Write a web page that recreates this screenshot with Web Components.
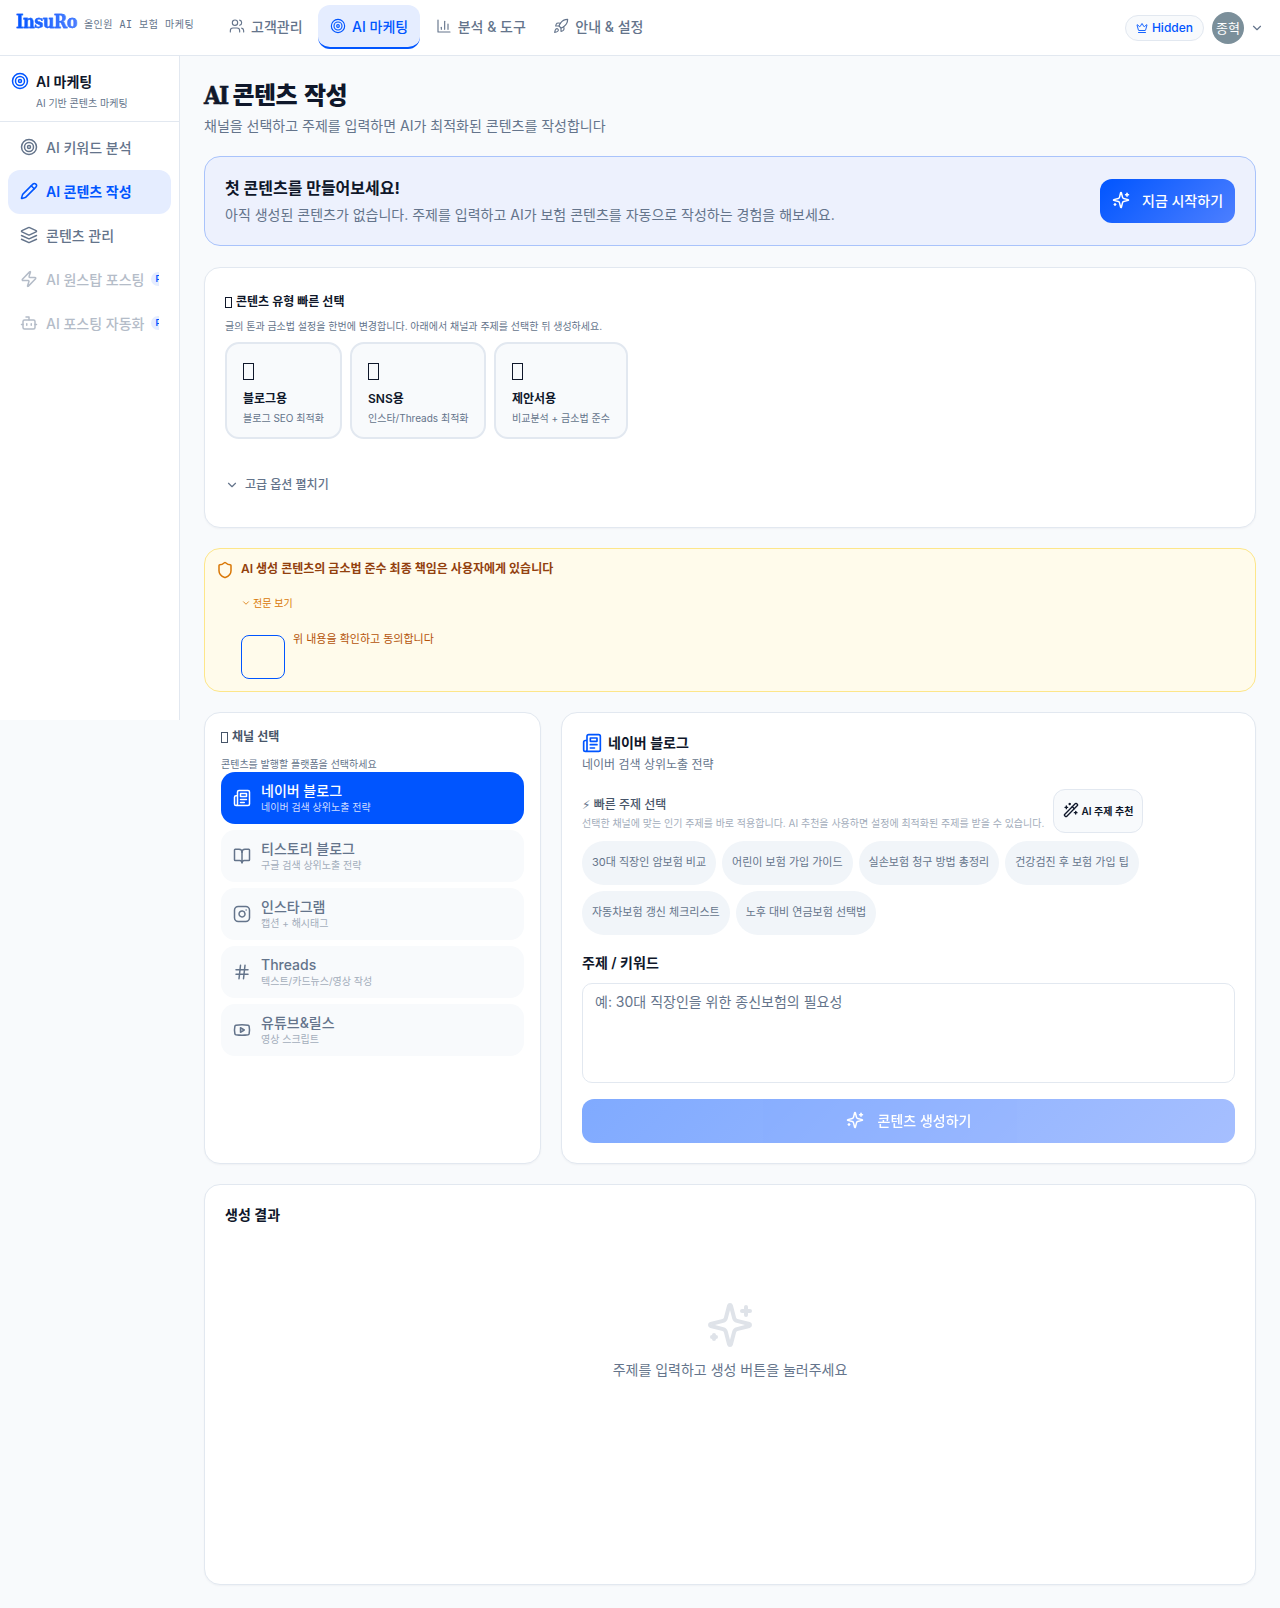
<!DOCTYPE html>
<html lang="ko">
<head>
<meta charset="utf-8">
<title>InsuRo</title>
<style>
    html, body { margin: 0; padding: 0; }
    body {
        width: 1280px;
        min-height: 1608px;
        background: #f8fafc;
        color: #0f172a;
        font-family: Inter, "Noto Sans CJK KR", sans-serif;
        font-size: 14px;
    }
    .layout { display: flex; align-items: flex-start; }
</style>
</head>
<body>
<app-header></app-header>
<div class="layout">
    <side-bar></side-bar>
    <content-page></content-page>
</div>

<script>
const ICONS = {
    users: '<path d="M16 21v-2a4 4 0 0 0-4-4H6a4 4 0 0 0-4 4v2"/><circle cx="9" cy="7" r="4"/><path d="M22 21v-2a4 4 0 0 0-3-3.87"/><path d="M16 3.13a4 4 0 0 1 0 7.75"/>',
    target: '<circle cx="12" cy="12" r="10"/><circle cx="12" cy="12" r="6"/><circle cx="12" cy="12" r="2"/>',
    chart: '<path d="M3 3v18h18"/><path d="M18 17V9"/><path d="M13 17V5"/><path d="M8 17v-3"/>',
    rocket: '<path d="M4.5 16.5c-1.5 1.26-2 5-2 5s3.74-.5 5-2c.71-.84.7-2.13-.09-2.91a2.18 2.18 0 0 0-2.91-.09z"/><path d="m12 15-3-3a22 22 0 0 1 2-3.95A12.88 12.88 0 0 1 22 2c0 2.72-.78 7.5-6 11a22.35 22.35 0 0 1-4 2z"/><path d="M9 12H4s.55-3.03 2-4c1.62-1.08 5 0 5 0"/><path d="M12 15v5s3.03-.55 4-2c1.08-1.62 0-5 0-5"/>',
    crown: '<path d="M11.562 3.266a.5.5 0 0 1 .876 0L15.39 8.87a1 1 0 0 0 1.516.294L21.183 5.5a.5.5 0 0 1 .798.519l-2.834 10.246a1 1 0 0 1-.956.734H5.81a1 1 0 0 1-.957-.734L2.02 6.02a.5.5 0 0 1 .798-.519l4.276 3.664a1 1 0 0 0 1.516-.294z"/><path d="M5 21h14"/>',
    chevron: '<path d="m6 9 6 6 6-6"/>',
    pencil: '<path d="M21.174 6.812a1 1 0 0 0-3.986-3.987L3.842 16.174a2 2 0 0 0-.5.83l-1.321 4.352a.5.5 0 0 0 .623.622l4.353-1.32a2 2 0 0 0 .83-.497z"/><path d="m15 5 4 4"/>',
    layers: '<path d="m12.83 2.18a2 2 0 0 0-1.66 0L2.6 6.08a1 1 0 0 0 0 1.83l8.58 3.91a2 2 0 0 0 1.66 0l8.58-3.9a1 1 0 0 0 0-1.83Z"/><path d="m22 17.65-9.17 4.16a2 2 0 0 1-1.66 0L2 17.65"/><path d="m22 12.65-9.17 4.16a2 2 0 0 1-1.66 0L2 12.65"/>',
    zap: '<path d="M4 14a1 1 0 0 1-.78-1.63l9.9-10.2a.5.5 0 0 1 .86.46l-1.92 6.02A1 1 0 0 0 13 10h7a1 1 0 0 1 .78 1.63l-9.9 10.2a.5.5 0 0 1-.86-.46l1.92-6.02A1 1 0 0 0 11 14z"/>',
    bot: '<path d="M12 8V4H8"/><rect width="16" height="12" x="4" y="8" rx="2"/><path d="M2 14h2"/><path d="M20 14h2"/><path d="M15 13v2"/><path d="M9 13v2"/>',
    sparkles: '<path d="M9.937 15.5A2 2 0 0 0 8.5 14.063l-6.135-1.582a.5.5 0 0 1 0-.962L8.5 9.936A2 2 0 0 0 9.937 8.5l1.582-6.135a.5.5 0 0 1 .963 0L14.063 8.5A2 2 0 0 0 15.5 9.937l6.135 1.581a.5.5 0 0 1 0 .964L15.5 14.063a2 2 0 0 0-1.437 1.437l-1.582 6.135a.5.5 0 0 1-.963 0z"/><path d="M20 3v4"/><path d="M22 5h-4"/><path d="M4 17v2"/><path d="M5 18H3"/>',
    shield: '<path d="M20 13c0 5-3.5 7.5-7.66 8.95a1 1 0 0 1-.67-.01C7.5 20.5 4 18 4 13V6a1 1 0 0 1 1-1c2 0 4.5-1.2 6.24-2.72a1.17 1.17 0 0 1 1.52 0C14.51 3.81 17 5 19 5a1 1 0 0 1 1 1z"/>',
    newspaper: '<path d="M4 22h16a2 2 0 0 0 2-2V4a2 2 0 0 0-2-2H8a2 2 0 0 0-2 2v16a2 2 0 0 1-2 2Zm0 0a2 2 0 0 1-2-2v-9c0-1.1.9-2 2-2h2"/><path d="M18 14h-8"/><path d="M15 18h-5"/><path d="M10 6h8v4h-8V6Z"/>',
    book: '<path d="M12 7v14"/><path d="M3 18a1 1 0 0 1-1-1V4a1 1 0 0 1 1-1h5a4 4 0 0 1 4 4 4 4 0 0 1 4-4h5a1 1 0 0 1 1 1v13a1 1 0 0 1-1 1h-6a3 3 0 0 0-3 3 3 3 0 0 0-3-3z"/>',
    instagram: '<rect width="20" height="20" x="2" y="2" rx="5" ry="5"/><path d="M16 11.37A4 4 0 1 1 12.63 8 4 4 0 0 1 16 11.37z"/><line x1="17.5" x2="17.51" y1="6.5" y2="6.5"/>',
    hash: '<line x1="4" x2="20" y1="9" y2="9"/><line x1="4" x2="20" y1="15" y2="15"/><line x1="10" x2="8" y1="3" y2="21"/><line x1="16" x2="14" y1="3" y2="21"/>',
    youtube: '<path d="M2.5 17a24.12 24.12 0 0 1 0-10 2 2 0 0 1 1.4-1.4 49.56 49.56 0 0 1 16.2 0A2 2 0 0 1 21.5 7a24.12 24.12 0 0 1 0 10 2 2 0 0 1-1.4 1.4 49.55 49.55 0 0 1-16.2 0A2 2 0 0 1 2.5 17"/><path d="m10 15 5-3-5-3z"/>',
    wand: '<path d="m21.64 3.64-1.28-1.28a1.21 1.21 0 0 0-1.72 0L2.36 18.64a1.21 1.21 0 0 0 0 1.72l1.28 1.28a1.2 1.2 0 0 0 1.72 0L21.64 5.36a1.2 1.2 0 0 0 0-1.72"/><path d="m14 7 3 3"/><path d="M5 6v4"/><path d="M19 14v4"/><path d="M10 2v2"/><path d="M7 8H3"/><path d="M21 16h-4"/><path d="M11 3H9"/>',
};

// shorthand for the shadow root boilerplate
class Base extends HTMLElement {
    constructor() {
        super();
        this.attachShadow({ mode: 'open' });
    }
    connectedCallback() {
        this.shadowRoot.innerHTML = this.render();
    }
}

class AppIcon extends Base {
    render() {
        const size = this.getAttribute('size') || 16;
        const sw = this.getAttribute('stroke') || 2;
        return `
            <style>
                :host { display: inline-flex; flex: none; }
                svg { width: ${size}px; height: ${size}px; fill: none; stroke: currentColor; stroke-width: ${sw}; stroke-linecap: round; stroke-linejoin: round; }
            </style>
            <svg viewBox="0 0 24 24">${ICONS[this.getAttribute('name')] || ''}</svg>
        `;
    }
}

// the empty box a browser paints for an emoji it has no font for
class TofuGlyph extends Base {
    render() {
        const w = this.getAttribute('w') || 7;
        const h = this.getAttribute('h') || 11;
        return `
            <style>
                :host { display: inline-block; width: ${w}px; height: ${h}px; box-sizing: border-box; border: 1px solid currentColor; vertical-align: -2px; }
            </style>
        `;
    }
}

class NavTab extends Base {
    render() {
        return `
            <style>
                :host { display: flex; align-items: center; gap: 6px; height: 44px; padding: 0 12px 2px; box-sizing: border-box; color: #64748b; font-size: 14px; font-weight: 500; border-radius: 12px; white-space: nowrap; }
                :host([active]) { background: #e5edff; color: #0055ff; border-bottom: 2px solid #0055ff; padding-bottom: 0; }
            </style>
            <app-icon name="${this.getAttribute('icon')}" size="16" stroke="1.7"></app-icon>
            <slot></slot>
        `;
    }
}

class AppHeader extends Base {
    render() {
        return `
            <style>
                :host { display: flex; align-items: center; height: 56px; box-sizing: border-box; background: #fff; border-bottom: 1px solid #e2e8f0; padding: 0 16px; }
                .brand { display: flex; align-items: baseline; gap: 7px; width: 201px; margin-top: -12px; flex: none; }
                .logo { font-family: "DejaVu Serif", serif; font-stretch: condensed; font-weight: 700; font-size: 18px; letter-spacing: -0.6px; background: linear-gradient(90deg, #0055ff, #4d7fff); -webkit-background-clip: text; background-clip: text; color: transparent; -webkit-text-stroke: 0.3px #2468ff; }
                .tag { font-family: "DejaVu Sans Mono", "Noto Sans CJK KR", monospace; font-size: 10px; letter-spacing: 0.5px; color: #64748b; white-space: pre; }
                nav { display: flex; gap: 3.5px; margin-top: -2px; }
                .right { margin-left: auto; display: flex; align-items: center; }
                .plan { display: flex; align-items: center; gap: 4px; height: 26px; box-sizing: border-box; padding: 0 10px; border: 1px solid #e2e8f0; border-radius: 13px; background: #f8fafc; color: #0055ff; font-size: 12px; font-weight: 500; }
                .avatar { display: flex; align-items: center; justify-content: center; width: 32px; height: 32px; margin-left: 8px; border-radius: 50%; background: #7b8f9a; color: #fff; font-size: 13px; }
                .caret { margin-left: 6px; color: #64748b; }
            </style>
            <div class="brand"><span class="logo">InsuRo</span><span class="tag">올인원 AI 보험 마케팅</span></div>
            <nav>
                <nav-tab icon="users">고객관리</nav-tab>
                <nav-tab icon="target" active>AI 마케팅</nav-tab>
                <nav-tab icon="chart">분석 &amp; 도구</nav-tab>
                <nav-tab icon="rocket">안내 &amp; 설정</nav-tab>
            </nav>
            <div class="right">
                <div class="plan"><app-icon name="crown" size="12" stroke="1.8"></app-icon>Hidden</div>
                <div class="avatar">종혁</div>
                <app-icon class="caret" name="chevron" size="14"></app-icon>
            </div>
        `;
    }
}

class SideItem extends Base {
    render() {
        const badge = this.hasAttribute('soon') ? '<span class="badge">Pro</span>' : '';
        return `
            <style>
                :host { display: flex; align-items: center; gap: 8px; height: 44px; padding: 0 12px 2px; box-sizing: border-box; border-radius: 12px; color: #64748b; font-size: 14px; font-weight: 500; white-space: nowrap; overflow: hidden; }
                :host([active]) { background: #e5edff; color: #0055ff; font-weight: 600; }
                :host([soon]) { color: #b4bcc8; width: 151px; padding-right: 0; }
                .badge { flex: none; margin-left: -2px; padding: 0 5px; height: 14px; line-height: 14px; border-radius: 7px; background: #e5edff; color: #0055ff; font-size: 9px; font-weight: 600; }
            </style>
            <app-icon name="${this.getAttribute('icon')}" size="18"></app-icon>
            <slot></slot>${badge}
        `;
    }
}

class SideBar extends Base {
    render() {
        return `
            <style>
                :host { display: block; flex: none; width: 180px; height: 664px; box-sizing: border-box; background: #fff; border-right: 1px solid #e2e8f0; }
                .head { height: 66px; box-sizing: border-box; padding: 15px 11px 0; border-bottom: 1px solid #e2e8f0; }
                .title { display: flex; align-items: center; gap: 7px; font-size: 14px; font-weight: 600; color: #0f172a; height: 20px; }
                .title app-icon { color: #0055ff; }
                .sub { margin: 5px 0 0 25px; font-size: 10px; line-height: 14px; color: #64748b; }
                .items { display: flex; flex-direction: column; padding: 4px 8px 0; }
            </style>
            <div class="head">
                <div class="title"><app-icon name="target" size="18"></app-icon>AI 마케팅</div>
                <div class="sub">AI 기반 콘텐츠 마케팅</div>
            </div>
            <div class="items">
                <side-item icon="target">AI 키워드 분석</side-item>
                <side-item icon="pencil" active>AI 콘텐츠 작성</side-item>
                <side-item icon="layers">콘텐츠 관리</side-item>
                <side-item icon="zap" soon>AI 원스탑 포스팅</side-item>
                <side-item icon="bot" soon>AI 포스팅 자동화</side-item>
            </div>
        `;
    }
}

class CardBox extends Base {
    render() {
        return `
            <style>
                :host { display: block; box-sizing: border-box; background: #fff; border: 1px solid #e2e8f0; border-radius: 16px; box-shadow: 0 1px 2px rgba(15, 23, 42, 0.04); }
            </style>
            <slot></slot>
        `;
    }
}

class PresetCard extends Base {
    render() {
        return `
            <style>
                :host { display: block; box-sizing: border-box; height: 97px; padding: 16px; background: #f8fafc; border: 2px solid #e2e8f0; border-radius: 14px; white-space: nowrap; }
                .glyph { display: flex; align-items: center; height: 23px; color: #0f172a; }
                .name { margin-top: 7px; font-size: 12px; line-height: 18px; font-weight: 600; color: #0f172a; }
                .desc { margin-top: 3px; font-size: 10px; line-height: 14px; color: #64748b; }
            </style>
            <div class="glyph"><tofu-glyph w="11" h="17"></tofu-glyph></div>
            <div class="name">${this.getAttribute('name')}</div>
            <div class="desc">${this.getAttribute('desc')}</div>
        `;
    }
}

class ChannelItem extends Base {
    render() {
        return `
            <style>
                :host { display: flex; align-items: center; gap: 10px; height: 52px; padding: 0 12px; box-sizing: border-box; border-radius: 14px; background: #f8fafc; color: #64748b; }
                :host([active]) { background: #0055ff; color: #fff; }
                .name { font-size: 14px; line-height: 18px; font-weight: 500; }
                .desc { font-size: 10px; line-height: 14px; color: #a3adbb; }
                :host([active]) .desc { color: #cfdcff; }
            </style>
            <app-icon name="${this.getAttribute('icon')}" size="18"></app-icon>
            <div>
                <div class="name">${this.getAttribute('name')}</div>
                <div class="desc">${this.getAttribute('desc')}</div>
            </div>
        `;
    }
}

class TopicChip extends Base {
    render() {
        return `
            <style>
                :host { display: flex; align-items: center; height: 44px; padding: 0 10px 4px; box-sizing: border-box; border-radius: 22px; background: #f1f5f9; color: #64748b; font-size: 11px; white-space: nowrap; }
            </style>
            <slot></slot>
        `;
    }
}

class ContentPage extends Base {
    render() {
        return `
            <style>
                :host { display: block; flex: 1; min-width: 0; padding: 24px 24px 23px; box-sizing: border-box; }
                h1 { margin: 0; font-family: "DejaVu Serif", "Noto Sans CJK KR", serif; font-stretch: condensed; font-size: 24px; line-height: 32px; font-weight: 800; letter-spacing: -0.6px; color: #0f172a; }
                h1 .ai { margin-right: -1.6px; letter-spacing: -1.8px; -webkit-text-stroke: 0.6px #0f172a; }
                .lead { margin: 4px 0 0; font-size: 14px; line-height: 20px; color: #64748b; }

                .banner { display: flex; align-items: center; justify-content: space-between; height: 90px; margin-top: 20px; padding: 0 20px; box-sizing: border-box; background: #edf1fd; border: 1px solid #a9c3fb; border-radius: 16px; }
                .banner h2 { margin: 0; font-size: 16px; line-height: 22px; font-weight: 700; color: #0f172a; }
                .banner p { margin: 6px 0 1px; font-size: 14px; line-height: 20px; color: #64748b; }
                .start { display: flex; align-items: center; gap: 12px; height: 44px; width: 135px; padding: 0 0 2px 12px; box-sizing: border-box; border-radius: 12px; background: linear-gradient(135deg, #0055ff, #4d7fff); color: #fff; font-size: 14px; font-weight: 500; white-space: nowrap; }

                .presets-card { height: 261px; margin-top: 21px; padding: 26px 20px 0; }
                .sec-title { font-size: 12px; line-height: 16px; font-weight: 600; color: #0f172a; }
                .sec-title tofu-glyph { margin-right: 1px; }
                .sec-sub { margin-top: 9px; font-size: 10px; line-height: 14px; color: #64748b; }
                .presets { display: flex; gap: 8px; margin-top: 9px; }
                .more { display: flex; align-items: center; gap: 6px; margin-top: 38px; font-size: 12px; line-height: 16px; font-weight: 500; color: #64748b; }

                .notice { height: 144px; margin-top: 20px; padding: 11px 11px; box-sizing: border-box; background: #fffbeb; border: 1px solid #fde68a; border-radius: 16px; }
                .notice-title { display: flex; align-items: flex-start; gap: 7px; font-size: 12px; line-height: 18px; font-weight: 600; color: #92400e; }
                .notice-title app-icon { color: #d97706; margin-top: 1px; }
                .fulltext { display: flex; align-items: center; gap: 2px; margin: 17px 0 0 25px; font-size: 10px; line-height: 14px; color: #d97706; }
                .agree { display: flex; gap: 8px; margin: 21px 0 0 25px; font-size: 11px; line-height: 16px; color: #b45309; }
                .check { width: 44px; height: 44px; margin-top: 4px; box-sizing: border-box; border: 1px solid #0055ff; border-radius: 8px; }

                .cols { display: grid; grid-template-columns: 337px 695px; gap: 20px; margin-top: 20px; }
                .cols card-box { height: 452px; }
                .left { padding: 16px; }
                .left .sec-title { color: #475569; }
                .left .sec-sub { margin-top: 12px; line-height: 14px; }
                .channels { display: flex; flex-direction: column; gap: 6px; margin-top: 1px; }

                .right { padding: 20px; }
                .right-head { display: flex; align-items: center; gap: 6px; font-size: 14px; line-height: 20px; font-weight: 600; color: #0f172a; }
                .right-head app-icon { color: #0055ff; }
                .right-sub { margin-top: 2px; font-size: 12px; line-height: 20px; color: #64748b; }
                .quick { display: flex; align-items: center; justify-content: space-between; height: 44px; margin-top: 14px; width: 561px; }
                .quick-text { padding-top: 4px; }
                .quick-title { font-size: 12px; line-height: 16px; font-weight: 500; color: #475569; }
                .bolt { font-family: "DejaVu Sans", sans-serif; font-size: 12px; color: #64748b; }
                .quick-sub { margin-top: 3px; font-size: 10px; line-height: 14px; color: #a3adbb; white-space: nowrap; }
                .suggest { display: flex; align-items: center; justify-content: center; gap: 3px; flex: none; width: 90px; height: 44px; padding-bottom: 2px; box-sizing: border-box; background: #f8fafc; border: 1px solid #e2e8f0; border-radius: 12px; font-size: 10px; font-weight: 600; color: #0f172a; white-space: nowrap; }
                .chips { display: flex; flex-wrap: wrap; gap: 6px; margin-top: 8px; }
                label { display: block; margin-top: 18px; font-size: 14px; line-height: 20px; font-weight: 600; color: #0f172a; }
                .input { height: 100px; margin-top: 10px; padding: 8px 12px; box-sizing: border-box; background: #fff; border: 1px solid #e2e8f0; border-radius: 10px; font-size: 14px; line-height: 20px; color: #64748b; }
                .generate { display: flex; align-items: center; justify-content: center; gap: 14px; height: 44px; margin-top: 16px; padding-bottom: 2px; box-sizing: border-box; border-radius: 12px; background: linear-gradient(135deg, #0055ff, #4d7fff); opacity: 0.5; color: #fff; font-size: 14px; font-weight: 500; }

                .result { height: 401px; margin-top: 20px; padding: 20px; }
                .result h3 { margin: 0; font-size: 14px; line-height: 20px; font-weight: 600; color: #0f172a; }
                .empty { display: flex; flex-direction: column; align-items: center; margin-top: 76px; color: #64748b; font-size: 14px; line-height: 20px; }
                .empty app-icon { color: #dfe3e9; margin-bottom: 11px; }
            </style>

            <h1><span class="ai">AI</span> 콘텐츠 작성</h1>
            <p class="lead">채널을 선택하고 주제를 입력하면 AI가 최적화된 콘텐츠를 작성합니다</p>

            <div class="banner">
                <div>
                    <h2>첫 콘텐츠를 만들어보세요!</h2>
                    <p>아직 생성된 콘텐츠가 없습니다. 주제를 입력하고 AI가 보험 콘텐츠를 자동으로 작성하는 경험을 해보세요.</p>
                </div>
                <div class="start"><app-icon name="sparkles" size="18"></app-icon>지금 시작하기</div>
            </div>

            <card-box class="presets-card">
                <div class="sec-title"><tofu-glyph></tofu-glyph> 콘텐츠 유형 빠른 선택</div>
                <div class="sec-sub">글의 톤과 금소법 설정을 한번에 변경합니다. 아래에서 채널과 주제를 선택한 뒤 생성하세요.</div>
                <div class="presets">
                    <preset-card style="width:117px" name="블로그용" desc="블로그 SEO 최적화"></preset-card>
                    <preset-card style="width:136px" name="SNS용" desc="인스타/Threads 최적화"></preset-card>
                    <preset-card style="width:134px" name="제안서용" desc="비교분석 + 금소법 준수"></preset-card>
                </div>
                <div class="more"><app-icon name="chevron" size="14"></app-icon>고급 옵션 펼치기</div>
            </card-box>

            <div class="notice">
                <div class="notice-title"><app-icon name="shield" size="18"></app-icon>AI 생성 콘텐츠의 금소법 준수 최종 책임은 사용자에게 있습니다</div>
                <div class="fulltext"><app-icon name="chevron" size="10"></app-icon>전문 보기</div>
                <div class="agree"><span class="check"></span>위 내용을 확인하고 동의합니다</div>
            </div>

            <div class="cols">
                <card-box class="left">
                    <div class="sec-title"><tofu-glyph></tofu-glyph> 채널 선택</div>
                    <div class="sec-sub">콘텐츠를 발행할 플랫폼을 선택하세요</div>
                    <div class="channels">
                        <channel-item active icon="newspaper" name="네이버 블로그" desc="네이버 검색 상위노출 전략"></channel-item>
                        <channel-item icon="book" name="티스토리 블로그" desc="구글 검색 상위노출 전략"></channel-item>
                        <channel-item icon="instagram" name="인스타그램" desc="캡션 + 해시태그"></channel-item>
                        <channel-item icon="hash" name="Threads" desc="텍스트/카드뉴스/영상 작성"></channel-item>
                        <channel-item icon="youtube" name="유튜브&amp;릴스" desc="영상 스크립트"></channel-item>
                    </div>
                </card-box>

                <card-box class="right">
                    <div class="right-head"><app-icon name="newspaper" size="20"></app-icon>네이버 블로그</div>
                    <div class="right-sub">네이버 검색 상위노출 전략</div>
                    <div class="quick">
                        <div class="quick-text">
                            <div class="quick-title"><span class="bolt">&#x26A1;&#xFE0E;</span> 빠른 주제 선택</div>
                            <div class="quick-sub">선택한 채널에 맞는 인기 주제를 바로 적용합니다. AI 추천을 사용하면 설정에 최적화된 주제를 받을 수 있습니다.</div>
                        </div>
                        <div class="suggest"><app-icon name="wand" size="16"></app-icon>AI 주제 추천</div>
                    </div>
                    <div class="chips">
                        <topic-chip>30대 직장인 암보험 비교</topic-chip>
                        <topic-chip>어린이 보험 가입 가이드</topic-chip>
                        <topic-chip>실손보험 청구 방법 총정리</topic-chip>
                        <topic-chip>건강검진 후 보험 가입 팁</topic-chip>
                        <topic-chip>자동차보험 갱신 체크리스트</topic-chip>
                        <topic-chip>노후 대비 연금보험 선택법</topic-chip>
                    </div>
                    <label>주제 / 키워드</label>
                    <div class="input">예: 30대 직장인을 위한 종신보험의 필요성</div>
                    <div class="generate"><app-icon name="sparkles" size="18"></app-icon>콘텐츠 생성하기</div>
                </card-box>
            </div>

            <card-box class="result">
                <h3>생성 결과</h3>
                <div class="empty">
                    <app-icon name="sparkles" size="48" stroke="2"></app-icon>
                    주제를 입력하고 생성 버튼을 눌러주세요
                </div>
            </card-box>
        `;
    }
}

customElements.define('app-icon', AppIcon);
customElements.define('tofu-glyph', TofuGlyph);
customElements.define('nav-tab', NavTab);
customElements.define('app-header', AppHeader);
customElements.define('side-item', SideItem);
customElements.define('side-bar', SideBar);
customElements.define('card-box', CardBox);
customElements.define('preset-card', PresetCard);
customElements.define('channel-item', ChannelItem);
customElements.define('topic-chip', TopicChip);
customElements.define('content-page', ContentPage);
</script>
</body>
</html>
